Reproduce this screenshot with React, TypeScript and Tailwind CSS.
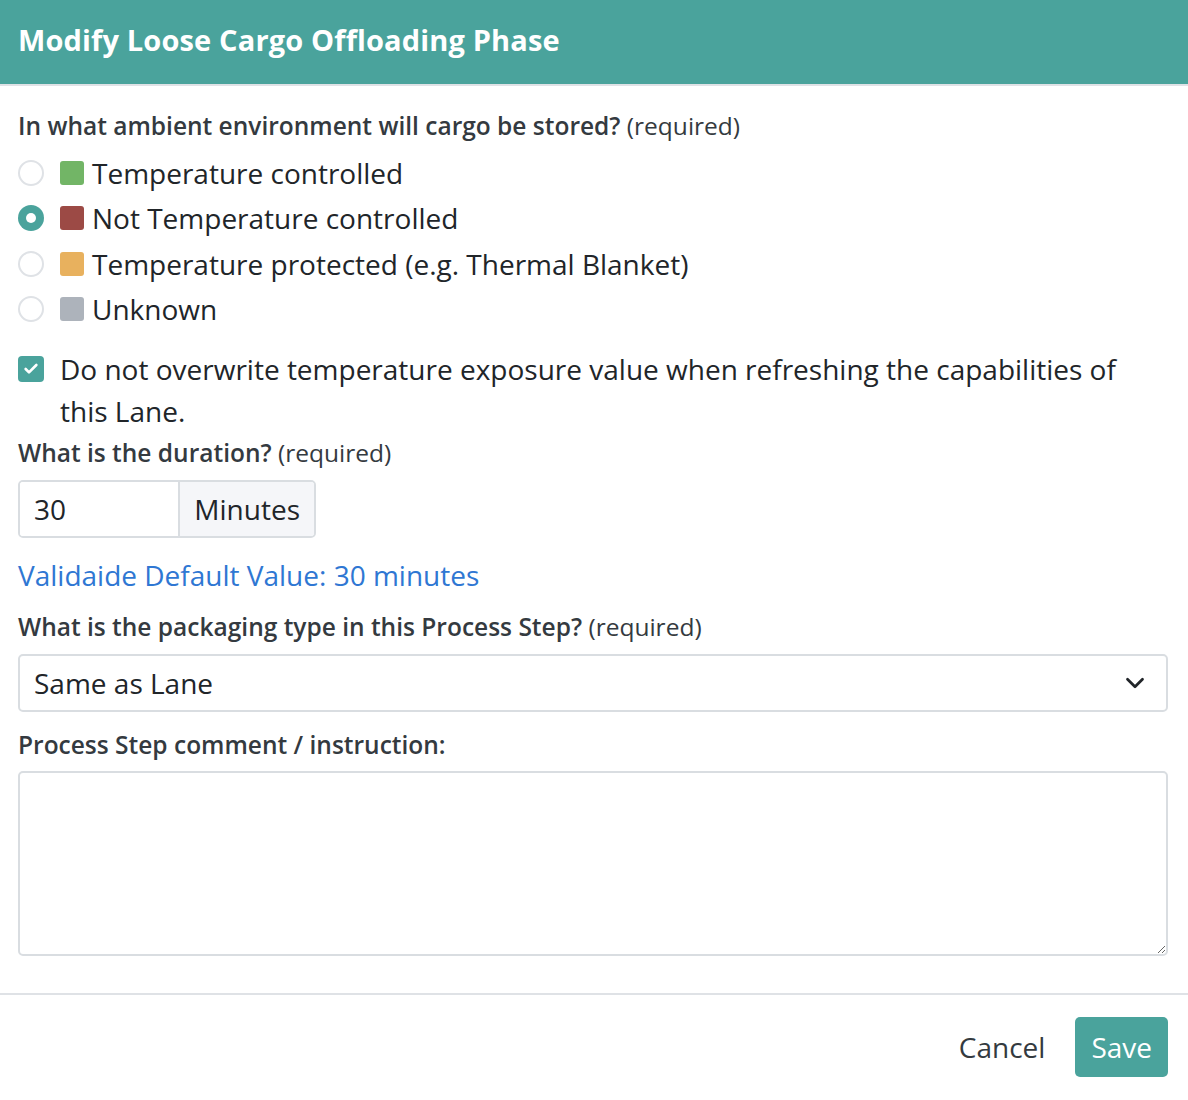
import { Check, ChevronDown } from "lucide-react";

const storageOptions = [
  { label: "Temperature controlled", color: "bg-[#72b566]" },
  { label: "Not Temperature controlled", color: "bg-[#9c4a45]" },
  { label: "Temperature protected (e.g. Thermal Blanket)", color: "bg-[#e8b15e]" },
  { label: "Unknown", color: "bg-[#adb3bb]" },
];

function FieldLabel({ text, required }: { text: string; required?: boolean }) {
  return (
    <div className="text-[24.5px] leading-[32px] text-[#343a40]">
      <span className="font-semibold">{text}</span>
      {required && <span> (required)</span>}
    </div>
  );
}

export default function App() {
  const selected = 1;

  return (
    <div className="w-[1188px] h-[1100px] bg-white font-['Open_Sans',sans-serif] text-[#212529]">
      {/* Header */}
      <div className="h-[84px] bg-[#4aa39c] flex items-center px-[18px] border-b-2 border-[#dfe2e6] box-content">
        <h1 className="text-white text-[29px] font-bold font-['Open_Sans',sans-serif] pb-[4px] tracking-[0.15px]">
          Modify Loose Cargo Offloading Phase
        </h1>
      </div>

      {/* Body */}
      <div className="pl-[18px] pr-[20px] pt-[24px] pb-[37px]">
        <FieldLabel text="In what ambient environment will cargo be stored?" required />

        <div className="mt-[8px]">
          {storageOptions.map((opt, i) => (
            <div key={opt.label} className="h-[45.5px] flex items-center">
              {i === selected ? (
                <span className="w-[26px] h-[26px] rounded-full bg-[#4aa39c] flex items-center justify-center">
                  <span className="w-[10px] h-[10px] rounded-full bg-white" />
                </span>
              ) : (
                <span className="w-[26px] h-[26px] rounded-full border-2 border-[#dfe2e6] bg-white" />
              )}
              <span className={`ml-[16px] w-[24px] h-[24px] rounded-[3px] ${opt.color}`} />
              <span className="ml-[8px] text-[28px] leading-[42px] text-[#212529]">{opt.label}</span>
            </div>
          ))}
        </div>

        {/* Overwrite checkbox */}
        <div className="mt-[16px] flex items-start">
          <span className="mt-[8px] shrink-0 w-[26px] h-[26px] rounded-[4px] bg-[#4aa39c] flex items-center justify-center">
            <Check className="w-[16px] h-[16px] text-white" strokeWidth={4} />
          </span>
          <span className="ml-[16px] text-[28px] leading-[42px] text-[#212529] pr-[40px]">
            Do not overwrite temperature exposure value when refreshing the capabilities of this Lane.
          </span>
        </div>

        <div className="mt-[5px]">
          <FieldLabel text="What is the duration?" required />
        </div>

        <div className="mt-[11px] flex w-[298px] h-[58px] border-2 border-[#d9dde1] rounded-[5px] overflow-hidden">
          <div className="w-[161px] flex items-center px-[14px] text-[28px] bg-white">30</div>
          <div className="flex-1 flex items-center px-[14px] text-[28px] bg-[#f5f6f9] border-l-2 border-[#d9dde1]">
            Minutes
          </div>
        </div>

        <div className="mt-[16px] text-[28px] leading-[42px] text-[#2f77d3]">Validaide Default Value: 30 minutes</div>

        <div className="mt-[15px]">
          <FieldLabel text="What is the packaging type in this Process Step?" required />
        </div>

        <div className="mt-[11px] h-[58px] border-2 border-[#d9dde1] rounded-[5px] flex items-center justify-between pl-[14px] pr-[16px]">
          <span className="text-[28px]">Same as Lane</span>
          <ChevronDown className="w-[30px] h-[30px] text-[#212529]" strokeWidth={2.2} />
        </div>

        <div className="mt-[17px]">
          <FieldLabel text="Process Step comment / instruction:" />
        </div>

        <textarea className="mt-[10px] block w-full h-[185px] border-2 border-[#d9dde1] rounded-[5px] outline-none" />
      </div>

      {/* Footer */}
      <div className="border-t-2 border-[#dfe2e6] flex justify-end items-center gap-[30px] pr-[20px] pt-[22px]">
        <button className="text-[28px] text-[#343a40]">Cancel</button>
        <button className="h-[60px] px-[16px] rounded-[5px] bg-[#4aa39c] text-white text-[28px]">Save</button>
      </div>
    </div>
  );
}
